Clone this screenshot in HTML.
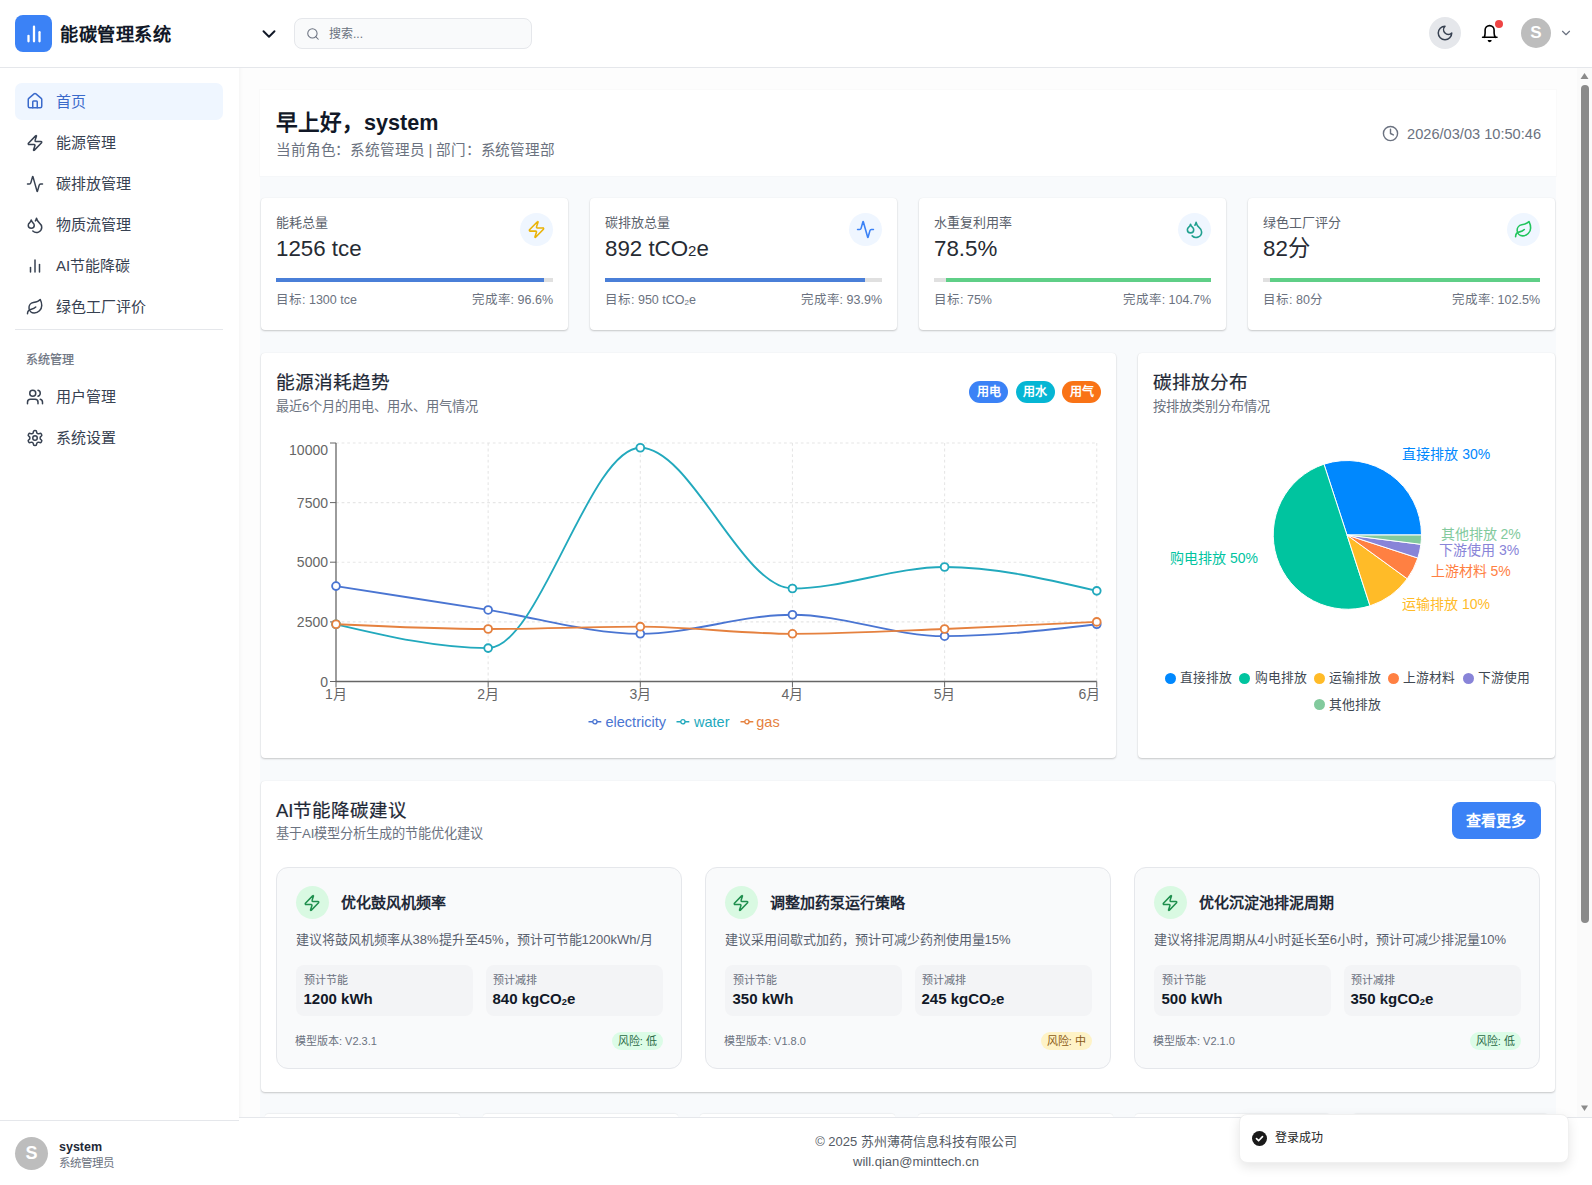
<!DOCTYPE html>
<html lang="zh-CN">
<head>
<meta charset="utf-8">
<title>能碳管理系统</title>
<style>
*{box-sizing:border-box;margin:0;padding:0}
html,body{width:1592px;height:1185px;overflow:hidden;background:#fdfdfd;font-family:"Liberation Sans",sans-serif;color:#111827}
.abs{position:absolute}
svg.ic{fill:none;stroke:currentColor;stroke-width:2;stroke-linecap:round;stroke-linejoin:round}
/* sidebar */
#sidebar{position:absolute;left:0;top:0;width:239px;height:1185px;background:#fff;box-shadow:1px 0 4px rgba(0,0,0,0.045)}
#logo{left:15px;top:15px;width:37px;height:37px;border-radius:8px;background:#3b82f6;color:#fff}
#logo svg{position:absolute;left:7.5px;top:7.5px;width:22px;height:22px;stroke-width:2.5}
#brand{left:60px;top:21px;font-size:18.2px;letter-spacing:0.5px;font-weight:bold;color:#111827;line-height:28px;white-space:nowrap}
#sbline{left:0;top:67px;width:239px;height:1px;background:#e5e7eb}
.nav{position:absolute;left:15px;width:208px;height:37px;border-radius:8px;color:#374151;font-size:15px;line-height:37px;white-space:nowrap}
.nav svg{position:absolute;left:11px;top:9.5px;width:18px;height:18px}
.nav span{position:absolute;left:41px;top:0}
.nav.active{background:#eff6ff;color:#3a6acb;border-radius:7px}
.nav.active svg{top:8.5px}
#sbdiv{left:15px;top:329px;width:208px;height:1px;background:#e5e7eb}
#sysl{left:26px;top:352px;font-size:12px;color:#6b7280;line-height:16px;-webkit-text-stroke:0.25px #6b7280}
#sbfoot{left:0;top:1120px;width:239px;height:1px;background:#e5e7eb}
#uav{left:15px;top:1137px;width:33px;height:33px;border-radius:50%;background:#bdbdbd;color:#fff;font-size:18px;font-weight:bold;line-height:33px;text-align:center}
#uname{left:59px;top:1139px;font-size:12.5px;font-weight:bold;color:#1f2937;line-height:16px}
#urole{left:59px;top:1156px;font-size:11.5px;color:#6b7280;line-height:15px}
/* header */
#header{position:absolute;left:239px;top:0;width:1353px;height:67px;background:#fff}
#hline{left:239px;top:67px;width:1353px;height:1px;background:#e5e7eb}
#search{left:294px;top:18px;width:238px;height:31px;border:1px solid #e5e7eb;border-radius:8px;background:#f9fafb}
#search svg{position:absolute;left:11px;top:7.5px;width:14px;height:14px;color:#6b7280;stroke-width:1.8}
#search span{position:absolute;left:34px;top:7px;font-size:12px;color:#6b7280;line-height:16px}
/* main */
#scroll{left:1577px;top:68px;width:15px;height:1049px;background:#fafafa}
#thumb{left:1581px;top:85px;width:8px;height:838px;border-radius:4px;background:#8c8c8c}
#container{left:260px;top:90px;width:1296px;height:1027px;background:#f8fafc}
.card{position:absolute;background:#fff;border-radius:4px;box-shadow:0 1px 2px rgba(0,0,0,0.2),0 0 1px rgba(0,0,0,0.08)}
#footer{left:239px;top:1117px;width:1338px;height:68px;background:#fff;border-top:1px solid #e5e7eb}
.sub{font-size:0.62em;vertical-align:-0.1em}
</style>
</head>
<body>
<!-- SIDEBAR -->
<div id="sidebar"></div>
<div id="logo" class="abs"><svg class="ic" viewBox="0 0 24 24"><line x1="18" x2="18" y1="20" y2="10"/><line x1="12" x2="12" y1="20" y2="4"/><line x1="6" x2="6" y1="20" y2="14"/></svg></div>
<div id="brand" class="abs">能碳管理系统</div>
<div id="sbline" class="abs"></div>

<div class="nav active" style="top:83px"><svg class="ic" viewBox="0 0 24 24"><path d="M15 21v-8a1 1 0 0 0-1-1h-4a1 1 0 0 0-1 1v8"/><path d="M3 10a2 2 0 0 1 .709-1.528l7-5.999a2 2 0 0 1 2.582 0l7 5.999A2 2 0 0 1 21 10v9a2 2 0 0 1-2 2H5a2 2 0 0 1-2-2z"/></svg><span>首页</span></div>
<div class="nav" style="top:124px"><svg class="ic" viewBox="0 0 24 24"><path d="M4 14a1 1 0 0 1-.78-1.63l9.9-10.2a.5.5 0 0 1 .86.46l-1.92 6.02A1 1 0 0 0 13 10h7a1 1 0 0 1 .78 1.630l-9.9 10.2a.5.5 0 0 1-.86-.46l1.92-6.02A1 1 0 0 0 11 14z"/></svg><span>能源管理</span></div>
<div class="nav" style="top:165px"><svg class="ic" viewBox="0 0 24 24"><path d="M22 12h-2.48a2 2 0 0 0-1.93 1.46l-2.35 8.36a.25.25 0 0 1-.48 0L9.24 2.18a.25.25 0 0 0-.48 0l-2.35 8.36A2 2 0 0 1 4.49 12H2"/></svg><span>碳排放管理</span></div>
<div class="nav" style="top:206px"><svg class="ic" viewBox="0 0 24 24"><path d="M7 16.3c2.2 0 4-1.83 4-4.05 0-1.16-.57-2.26-1.71-3.19S7.29 6.75 7 5.3c-.29 1.450-1.14 2.84-2.29 3.76S3 11.1 3 12.25c0 2.220 1.8 4.05 4 4.05z"/><path d="M12.56 6.6A10.97 10.97 0 0 0 14 3.02c.5 2.5 2 4.9 4 6.5s3 3.5 3 5.5a6.98 6.98 0 0 1-11.91 4.97"/></svg><span>物质流管理</span></div>
<div class="nav" style="top:247px"><svg class="ic" viewBox="0 0 24 24"><line x1="18" x2="18" y1="20" y2="10"/><line x1="12" x2="12" y1="20" y2="4"/><line x1="6" x2="6" y1="20" y2="14"/></svg><span>AI节能降碳</span></div>
<div class="nav" style="top:288px"><svg class="ic" viewBox="0 0 24 24"><path d="M11 20A7 7 0 0 1 9.8 6.1C15.5 5 17 4.48 19 2c1 2 2 4.18 2 8 0 5.5-4.78 10-10 10Z"/><path d="M2 21c0-3 1.85-5.36 5.08-6C9.5 14.52 12 13 13 12"/></svg><span>绿色工厂评价</span></div>
<div id="sbdiv" class="abs"></div>
<div id="sysl" class="abs">系统管理</div>
<div class="nav" style="top:378px"><svg class="ic" viewBox="0 0 24 24"><path d="M16 21v-2a4 4 0 0 0-4-4H6a4 4 0 0 0-4 4v2"/><circle cx="9" cy="7" r="4"/><path d="M22 21v-2a4 4 0 0 0-3-3.87"/><path d="M16 3.13a4 4 0 0 1 0 7.75"/></svg><span>用户管理</span></div>
<div class="nav" style="top:419px"><svg class="ic" viewBox="0 0 24 24"><path d="M12.22 2h-.44a2 2 0 0 0-2 2v.18a2 2 0 0 1-1 1.73l-.43.25a2 2 0 0 1-2 0l-.15-.08a2 2 0 0 0-2.73.73l-.22.38a2 2 0 0 0 .73 2.73l.15.1a2 2 0 0 1 1 1.72v.51a2 2 0 0 1-1 1.74l-.15.09a2 2 0 0 0-.73 2.73l.22.38a2 2 0 0 0 2.73.73l.15-.08a2 2 0 0 1 2 0l.43.25a2 2 0 0 1 1 1.73V20a2 2 0 0 0 2 2h.44a2 2 0 0 0 2-2v-.18a2 2 0 0 1 1-1.73l.43-.25a2 2 0 0 1 2 0l.15.08a2 2 0 0 0 2.73-.73l.22-.39a2 2 0 0 0-.73-2.73l-.15-.08a2 2 0 0 1-1-1.74v-.5a2 2 0 0 1 1-1.74l.15-.09a2 2 0 0 0 .73-2.73l-.22-.38a2 2 0 0 0-2.73-.73l-.15.08a2 2 0 0 1-2 0l-.43-.25a2 2 0 0 1-1-1.73V4a2 2 0 0 0-2-2z"/><circle cx="12" cy="12" r="3"/></svg><span>系统设置</span></div>
<div id="sbfoot" class="abs"></div>
<div id="uav" class="abs">S</div>
<div id="uname" class="abs">system</div>
<div id="urole" class="abs">系统管理员</div>

<!-- HEADER -->
<div id="header"></div>
<div id="hline" class="abs"></div>
<svg class="ic abs" style="left:258px;top:22.5px;width:22px;height:22px;color:#111827;stroke-width:2.1" viewBox="0 0 24 24"><path d="m6 9 6 6 6-6"/></svg>
<div id="search" class="abs"><svg class="ic" viewBox="0 0 24 24"><circle cx="11" cy="11" r="8"/><path d="m21 21-4.3-4.3"/></svg><span>搜索...</span></div>


<div class="abs" style="left:1429px;top:17px;width:32px;height:32px;border-radius:50%;background:#e5e7eb"></div>
<svg class="ic abs" style="left:1436px;top:24px;width:18px;height:18px;color:#374151" viewBox="0 0 24 24"><path d="M12 3a6 6 0 0 0 9 9 9 9 0 1 1-9-9Z"/></svg>
<svg class="abs" style="left:1480px;top:22px;width:20px;height:22px" viewBox="0 0 20 22"><path d="M2.6,15.3H17 M4.1,15.3Q5.1,13.6 5.1,11V8.1A4.5,4.5 0 0 1 14.1,8.1V11Q14.1,13.6 15.5,15.3" fill="none" stroke="#000" stroke-width="1.6" stroke-linecap="round" stroke-linejoin="round"/><path d="M7.6,18.1H11.7A2.05,2.05 0 0 1 7.6,18.1Z" fill="#000"/></svg>
<div class="abs" style="left:1495px;top:20px;width:8px;height:8px;border-radius:50%;background:#ef4444"></div>
<div class="abs" style="left:1521px;top:18px;width:30px;height:30px;border-radius:50%;background:#bdbdbd;color:#fff;font-size:17px;font-weight:bold;line-height:30px;text-align:center">S</div>
<svg class="ic abs" style="left:1559px;top:26px;width:14px;height:14px;color:#6b7280" viewBox="0 0 24 24"><path d="m6 9 6 6 6-6"/></svg>

<!-- MAIN -->
<div id="container" class="abs"></div>
<div class="abs" style="left:260px;top:90px;width:1296px;height:86px;background:#fff;box-shadow:0 0 0 1px rgba(0,0,0,0.012)"></div>
<div class="abs" style="left:276px;top:107px;font-size:21.6px;font-weight:bold;color:#111827;line-height:32px;white-space:nowrap">早上好，system</div>
<div class="abs" style="left:276px;top:139px;font-size:14.6px;letter-spacing:-0.15px;color:#6b7280;line-height:22px;white-space:nowrap">当前角色：系统管理员 | 部门：系统管理部</div>
<svg class="ic abs" style="left:1382px;top:125px;width:17px;height:17px;color:#6b7280" viewBox="0 0 24 24"><circle cx="12" cy="12" r="10"/><polyline points="12 6 12 12 16 14"/></svg>
<div class="abs" style="left:1406px;top:124px;width:135px;text-align:right;font-size:14.6px;color:#6b7280;line-height:20px;white-space:nowrap">2026/03/03 10:50:46</div>
<div class="card" style="left:261px;top:198px;width:307px;height:132px"></div>
<div class="abs" style="left:276px;top:214px;font-size:13px;color:#5b626c;line-height:18px;white-space:nowrap">能耗总量</div>
<div class="abs" style="left:276px;top:235px;font-size:22.3px;color:#262b33;line-height:28px;white-space:nowrap">1256 tce</div>
<div class="abs" style="left:520px;top:213px;width:33px;height:33px;border-radius:50%;background:#eff6ff"></div>
<svg class="ic abs" style="left:527px;top:220px;width:19px;height:19px;color:#eab308" viewBox="0 0 24 24"><path d="M4 14a1 1 0 0 1-.78-1.63l9.9-10.2a.5.5 0 0 1 .86.46l-1.92 6.02A1 1 0 0 0 13 10h7a1 1 0 0 1 .78 1.63l-9.9 10.2a.5.5 0 0 1-.86-.46l1.92-6.02A1 1 0 0 0 11 14z"/></svg>
<div class="abs" style="left:276px;top:278px;width:277px;height:4px;background:#e0e0e0;overflow:hidden">
<div class="abs" style="left:0;top:0;width:267.6px;height:4px;background:#4a7fd8"></div></div>
<div class="abs" style="left:276px;top:292px;font-size:12.5px;color:#6b7280;line-height:17px;white-space:nowrap">目标: 1300 tce</div>
<div class="abs" style="left:276px;top:292px;width:277px;text-align:right;font-size:12.5px;color:#6b7280;line-height:17px;white-space:nowrap">完成率: 96.6%</div>
<div class="card" style="left:590px;top:198px;width:307px;height:132px"></div>
<div class="abs" style="left:605px;top:214px;font-size:13px;color:#5b626c;line-height:18px;white-space:nowrap">碳排放总量</div>
<div class="abs" style="left:605px;top:235px;font-size:22.3px;color:#262b33;line-height:28px;white-space:nowrap">892 tCO<span style="font-size:15px">2</span>e</div>
<div class="abs" style="left:849px;top:213px;width:33px;height:33px;border-radius:50%;background:#eff6ff"></div>
<svg class="ic abs" style="left:856px;top:220px;width:19px;height:19px;color:#3b82f6" viewBox="0 0 24 24"><path d="M22 12h-2.48a2 2 0 0 0-1.93 1.46l-2.35 8.36a.25.25 0 0 1-.48 0L9.24 2.18a.25.25 0 0 0-.48 0l-2.35 8.36A2 2 0 0 1 4.49 12H2"/></svg>
<div class="abs" style="left:605px;top:278px;width:277px;height:4px;background:#e0e0e0;overflow:hidden">
<div class="abs" style="left:0;top:0;width:260.1px;height:4px;background:#4a7fd8"></div></div>
<div class="abs" style="left:605px;top:292px;font-size:12.5px;color:#6b7280;line-height:17px;white-space:nowrap">目标: 950 tCO<span style="font-size:8px;vertical-align:-1px">2</span>e</div>
<div class="abs" style="left:605px;top:292px;width:277px;text-align:right;font-size:12.5px;color:#6b7280;line-height:17px;white-space:nowrap">完成率: 93.9%</div>
<div class="card" style="left:919px;top:198px;width:307px;height:132px"></div>
<div class="abs" style="left:934px;top:214px;font-size:13px;color:#5b626c;line-height:18px;white-space:nowrap">水重复利用率</div>
<div class="abs" style="left:934px;top:235px;font-size:22.3px;color:#262b33;line-height:28px;white-space:nowrap">78.5%</div>
<div class="abs" style="left:1178px;top:213px;width:33px;height:33px;border-radius:50%;background:#eff6ff"></div>
<svg class="ic abs" style="left:1185px;top:220px;width:19px;height:19px;color:#20a08f" viewBox="0 0 24 24"><path d="M7 16.3c2.2 0 4-1.83 4-4.05 0-1.16-.57-2.26-1.71-3.19S7.29 6.75 7 5.3c-.29 1.45-1.14 2.84-2.29 3.76S3 11.1 3 12.25c0 2.22 1.8 4.05 4 4.05z"/><path d="M12.56 6.6A10.97 10.97 0 0 0 14 3.02c.5 2.5 2 4.9 4 6.5s3 3.5 3 5.5a6.98 6.98 0 0 1-11.91 4.97"/></svg>
<div class="abs" style="left:934px;top:278px;width:277px;height:4px;background:#e0e0e0;overflow:hidden">
<div class="abs" style="left:12.4px;top:0;width:264.6px;height:4px;background:#5fcf87"></div></div>
<div class="abs" style="left:934px;top:292px;font-size:12.5px;color:#6b7280;line-height:17px;white-space:nowrap">目标: 75%</div>
<div class="abs" style="left:934px;top:292px;width:277px;text-align:right;font-size:12.5px;color:#6b7280;line-height:17px;white-space:nowrap">完成率: 104.7%</div>
<div class="card" style="left:1248px;top:198px;width:307px;height:132px"></div>
<div class="abs" style="left:1263px;top:214px;font-size:13px;color:#5b626c;line-height:18px;white-space:nowrap">绿色工厂评分</div>
<div class="abs" style="left:1263px;top:235px;font-size:22.3px;color:#262b33;line-height:28px;white-space:nowrap">82分</div>
<div class="abs" style="left:1507px;top:213px;width:33px;height:33px;border-radius:50%;background:#eff6ff"></div>
<svg class="ic abs" style="left:1514px;top:220px;width:19px;height:19px;color:#22c55e" viewBox="0 0 24 24"><path d="M11 20A7 7 0 0 1 9.8 6.1C15.5 5 17 4.48 19 2c1 2 2 4.18 2 8 0 5.5-4.78 10-10 10Z"/><path d="M2 21c0-3 1.85-5.36 5.08-6C9.5 14.52 12 13 13 12"/></svg>
<div class="abs" style="left:1263px;top:278px;width:277px;height:4px;background:#e0e0e0;overflow:hidden">
<div class="abs" style="left:6.8px;top:0;width:270.2px;height:4px;background:#5fcf87"></div></div>
<div class="abs" style="left:1263px;top:292px;font-size:12.5px;color:#6b7280;line-height:17px;white-space:nowrap">目标: 80分</div>
<div class="abs" style="left:1263px;top:292px;width:277px;text-align:right;font-size:12.5px;color:#6b7280;line-height:17px;white-space:nowrap">完成率: 102.5%</div>
<div class="card" style="left:261px;top:353px;width:855px;height:405px"></div>
<div class="abs" style="left:276px;top:370px;font-size:18.7px;color:#1f2937;line-height:26px;-webkit-text-stroke:0.2px #1f2937;white-space:nowrap">能源消耗趋势</div>
<div class="abs" style="left:276px;top:397.5px;font-size:13.2px;color:#6b7280;line-height:18px;white-space:nowrap">最近6个月的用电、用水、用气情况</div>
<div class="abs" style="left:969.0px;top:381px;width:39px;height:22px;border-radius:11px;background:#3b82f6;color:#fff;font-size:12px;font-weight:bold;line-height:22px;text-align:center">用电</div>
<div class="abs" style="left:1015.6px;top:381px;width:39px;height:22px;border-radius:11px;background:#06b6d4;color:#fff;font-size:12px;font-weight:bold;line-height:22px;text-align:center">用水</div>
<div class="abs" style="left:1062.2px;top:381px;width:39px;height:22px;border-radius:11px;background:#f97316;color:#fff;font-size:12px;font-weight:bold;line-height:22px;text-align:center">用气</div>
<div class="card" style="left:1138px;top:353px;width:417px;height:405px"></div>
<div class="abs" style="left:1153px;top:370px;font-size:18.7px;color:#1f2937;line-height:26px;-webkit-text-stroke:0.2px #1f2937;white-space:nowrap">碳排放分布</div>
<div class="abs" style="left:1153px;top:397.5px;font-size:13.2px;color:#6b7280;line-height:18px;white-space:nowrap">按排放类别分布情况</div>
<svg class="abs" style="left:0;top:0;width:1592px;height:1185px;overflow:visible" viewBox="0 0 1592 1185">
<line x1="336" y1="621.9" x2="1096.75" y2="621.9" stroke="#e6e6e6" stroke-width="1.1" stroke-dasharray="2.8 2.8"/>
<line x1="336" y1="562.2" x2="1096.75" y2="562.2" stroke="#e6e6e6" stroke-width="1.1" stroke-dasharray="2.8 2.8"/>
<line x1="336" y1="502.6" x2="1096.75" y2="502.6" stroke="#e6e6e6" stroke-width="1.1" stroke-dasharray="2.8 2.8"/>
<line x1="336" y1="443.0" x2="1096.75" y2="443.0" stroke="#e6e6e6" stroke-width="1.1" stroke-dasharray="2.8 2.8"/>
<line x1="488.15" y1="443" x2="488.15" y2="681.5" stroke="#e6e6e6" stroke-width="1.1" stroke-dasharray="2.8 2.8"/>
<line x1="640.3" y1="443" x2="640.3" y2="681.5" stroke="#e6e6e6" stroke-width="1.1" stroke-dasharray="2.8 2.8"/>
<line x1="792.45" y1="443" x2="792.45" y2="681.5" stroke="#e6e6e6" stroke-width="1.1" stroke-dasharray="2.8 2.8"/>
<line x1="944.6" y1="443" x2="944.6" y2="681.5" stroke="#e6e6e6" stroke-width="1.1" stroke-dasharray="2.8 2.8"/>
<line x1="1096.75" y1="443" x2="1096.75" y2="681.5" stroke="#e6e6e6" stroke-width="1.1" stroke-dasharray="2.8 2.8"/>
<line x1="336" y1="443" x2="336" y2="681.5" stroke="#666" stroke-width="1.3"/>
<line x1="336" y1="681.5" x2="1096.75" y2="681.5" stroke="#666" stroke-width="1.3"/>
<line x1="330" y1="681.5" x2="336" y2="681.5" stroke="#666"/>
<text x="328" y="686.5" text-anchor="end" font-size="14" fill="#666">0</text>
<line x1="330" y1="621.9" x2="336" y2="621.9" stroke="#666"/>
<text x="328" y="626.9" text-anchor="end" font-size="14" fill="#666">2500</text>
<line x1="330" y1="562.2" x2="336" y2="562.2" stroke="#666"/>
<text x="328" y="567.2" text-anchor="end" font-size="14" fill="#666">5000</text>
<line x1="330" y1="502.6" x2="336" y2="502.6" stroke="#666"/>
<text x="328" y="507.6" text-anchor="end" font-size="14" fill="#666">7500</text>
<line x1="330" y1="443.0" x2="336" y2="443.0" stroke="#666"/>
<text x="328" y="455.0" text-anchor="end" font-size="14" fill="#666">10000</text>
<line x1="336.0" y1="681.5" x2="336.0" y2="687.5" stroke="#666"/>
<text x="336.0" y="698.5" text-anchor="middle" font-size="14" fill="#666">1月</text>
<line x1="488.15" y1="681.5" x2="488.15" y2="687.5" stroke="#666"/>
<text x="488.15" y="698.5" text-anchor="middle" font-size="14" fill="#666">2月</text>
<line x1="640.3" y1="681.5" x2="640.3" y2="687.5" stroke="#666"/>
<text x="640.3" y="698.5" text-anchor="middle" font-size="14" fill="#666">3月</text>
<line x1="792.45" y1="681.5" x2="792.45" y2="687.5" stroke="#666"/>
<text x="792.45" y="698.5" text-anchor="middle" font-size="14" fill="#666">4月</text>
<line x1="944.6" y1="681.5" x2="944.6" y2="687.5" stroke="#666"/>
<text x="944.6" y="698.5" text-anchor="middle" font-size="14" fill="#666">5月</text>
<line x1="1096.75" y1="681.5" x2="1096.75" y2="687.5" stroke="#666"/>
<text x="1089.5" y="698.5" text-anchor="middle" font-size="14" fill="#666">6月</text>
<path d="M336.00,586.10C386.72,594.05,437.43,602.00,488.15,609.95C538.87,617.90,589.58,633.80,640.30,633.80C691.02,633.80,741.73,614.72,792.45,614.72C843.17,614.72,893.88,636.18,944.60,636.18C995.32,636.18,1046.03,630.22,1096.75,624.26" fill="none" stroke="#4a75d2" stroke-width="1.85"/>
<path d="M336.00,624.26C386.72,636.18,437.43,648.11,488.15,648.11C538.87,648.11,589.58,447.77,640.30,447.77C691.02,447.77,741.73,588.49,792.45,588.49C843.17,588.49,893.88,567.02,944.60,567.02C995.32,567.02,1046.03,578.94,1096.75,590.87" fill="none" stroke="#22a9bd" stroke-width="1.85"/>
<path d="M336.00,624.26C386.72,626.64,437.43,629.03,488.15,629.03C538.87,629.03,589.58,626.64,640.30,626.64C691.02,626.64,741.73,633.80,792.45,633.80C843.17,633.80,893.88,631.02,944.60,629.03C995.32,627.04,1046.03,624.46,1096.75,621.88" fill="none" stroke="#e5813f" stroke-width="1.85"/>
<circle cx="336.0" cy="586.10" r="3.9" fill="#fff" stroke="#4a75d2" stroke-width="1.85"/>
<circle cx="488.15" cy="609.95" r="3.9" fill="#fff" stroke="#4a75d2" stroke-width="1.85"/>
<circle cx="640.3" cy="633.80" r="3.9" fill="#fff" stroke="#4a75d2" stroke-width="1.85"/>
<circle cx="792.45" cy="614.72" r="3.9" fill="#fff" stroke="#4a75d2" stroke-width="1.85"/>
<circle cx="944.6" cy="636.18" r="3.9" fill="#fff" stroke="#4a75d2" stroke-width="1.85"/>
<circle cx="1096.75" cy="624.26" r="3.9" fill="#fff" stroke="#4a75d2" stroke-width="1.85"/>
<circle cx="336.0" cy="624.26" r="3.9" fill="#fff" stroke="#22a9bd" stroke-width="1.85"/>
<circle cx="488.15" cy="648.11" r="3.9" fill="#fff" stroke="#22a9bd" stroke-width="1.85"/>
<circle cx="640.3" cy="447.77" r="3.9" fill="#fff" stroke="#22a9bd" stroke-width="1.85"/>
<circle cx="792.45" cy="588.49" r="3.9" fill="#fff" stroke="#22a9bd" stroke-width="1.85"/>
<circle cx="944.6" cy="567.02" r="3.9" fill="#fff" stroke="#22a9bd" stroke-width="1.85"/>
<circle cx="1096.75" cy="590.87" r="3.9" fill="#fff" stroke="#22a9bd" stroke-width="1.85"/>
<circle cx="336.0" cy="624.26" r="3.9" fill="#fff" stroke="#e5813f" stroke-width="1.85"/>
<circle cx="488.15" cy="629.03" r="3.9" fill="#fff" stroke="#e5813f" stroke-width="1.85"/>
<circle cx="640.3" cy="626.64" r="3.9" fill="#fff" stroke="#e5813f" stroke-width="1.85"/>
<circle cx="792.45" cy="633.80" r="3.9" fill="#fff" stroke="#e5813f" stroke-width="1.85"/>
<circle cx="944.6" cy="629.03" r="3.9" fill="#fff" stroke="#e5813f" stroke-width="1.85"/>
<circle cx="1096.75" cy="621.88" r="3.9" fill="#fff" stroke="#e5813f" stroke-width="1.85"/>
<g transform="translate(588.5,715.3) scale(0.40)"><path d="M0,16h10.667A5.333,5.333,0,1,1,21.333,16H32M21.333,16A5.333,5.333,0,1,1,10.667,16" fill="none" stroke="#4a75d2" stroke-width="3.4"/></g>
<text x="605.5" y="726.5" font-size="14.5" fill="#4a75d2">electricity</text>
<g transform="translate(676.5,715.3) scale(0.40)"><path d="M0,16h10.667A5.333,5.333,0,1,1,21.333,16H32M21.333,16A5.333,5.333,0,1,1,10.667,16" fill="none" stroke="#22a9bd" stroke-width="3.4"/></g>
<text x="694" y="726.5" font-size="14.5" fill="#22a9bd">water</text>
<g transform="translate(740.5,715.3) scale(0.40)"><path d="M0,16h10.667A5.333,5.333,0,1,1,21.333,16H32M21.333,16A5.333,5.333,0,1,1,10.667,16" fill="none" stroke="#e5813f" stroke-width="3.4"/></g>
<text x="756.3" y="726.5" font-size="14.5" fill="#e5813f">gas</text>
<path d="M1347,535L1421.50,535.00A74.5,74.5,0,0,0,1323.98,464.15Z" fill="#0088FE" stroke="#fff" stroke-width="1"/>
<path d="M1347,535L1323.98,464.15A74.5,74.5,0,0,0,1370.02,605.85Z" fill="#00C49F" stroke="#fff" stroke-width="1"/>
<path d="M1347,535L1370.02,605.85A74.5,74.5,0,0,0,1407.27,578.79Z" fill="#FFBB28" stroke="#fff" stroke-width="1"/>
<path d="M1347,535L1407.27,578.79A74.5,74.5,0,0,0,1417.85,558.02Z" fill="#FF8042" stroke="#fff" stroke-width="1"/>
<path d="M1347,535L1417.85,558.02A74.5,74.5,0,0,0,1420.91,544.34Z" fill="#8884D8" stroke="#fff" stroke-width="1"/>
<path d="M1347,535L1420.91,544.34A74.5,74.5,0,0,0,1421.50,535.00Z" fill="#82CA9D" stroke="#fff" stroke-width="1"/>
<text x="1402.3" y="458.8" text-anchor="start" font-size="14" fill="#0088FE">直接排放 30%</text>
<text x="1258" y="563" text-anchor="end" font-size="14" fill="#00C49F">购电排放 50%</text>
<text x="1402" y="609" text-anchor="start" font-size="14" fill="#FFBB28">运输排放 10%</text>
<text x="1430.7" y="575.7" text-anchor="start" font-size="14" fill="#FF8042">上游材料 5%</text>
<text x="1439" y="554.5" text-anchor="start" font-size="14" fill="#8884D8">下游使用 3%</text>
<text x="1440.5" y="539.3" text-anchor="start" font-size="14" fill="#82CA9D">其他排放 2%</text>
</svg>
<div class="abs" style="left:1164.7px;top:672.9px;width:11px;height:11px;border-radius:50%;background:#0088FE"></div>
<div class="abs" style="left:1180.0px;top:669.4px;font-size:12.8px;color:#404852;line-height:18px;white-space:nowrap">直接排放</div>
<div class="abs" style="left:1239.4px;top:672.9px;width:11px;height:11px;border-radius:50%;background:#00C49F"></div>
<div class="abs" style="left:1254.7px;top:669.4px;font-size:12.8px;color:#404852;line-height:18px;white-space:nowrap">购电排放</div>
<div class="abs" style="left:1313.6px;top:672.9px;width:11px;height:11px;border-radius:50%;background:#FFBB28"></div>
<div class="abs" style="left:1328.9px;top:669.4px;font-size:12.8px;color:#404852;line-height:18px;white-space:nowrap">运输排放</div>
<div class="abs" style="left:1388.1px;top:672.9px;width:11px;height:11px;border-radius:50%;background:#FF8042"></div>
<div class="abs" style="left:1403.4px;top:669.4px;font-size:12.8px;color:#404852;line-height:18px;white-space:nowrap">上游材料</div>
<div class="abs" style="left:1463.0px;top:672.9px;width:11px;height:11px;border-radius:50%;background:#8884D8"></div>
<div class="abs" style="left:1478.3px;top:669.4px;font-size:12.8px;color:#404852;line-height:18px;white-space:nowrap">下游使用</div>
<div class="abs" style="left:1313.6px;top:699.1px;width:11px;height:11px;border-radius:50%;background:#82CA9D"></div>
<div class="abs" style="left:1328.9px;top:695.6px;font-size:12.8px;color:#404852;line-height:18px;white-space:nowrap">其他排放</div>
<div class="card" style="left:261px;top:781px;width:1294px;height:311px"></div>
<div class="abs" style="left:276px;top:798px;font-size:18.5px;color:#1f2937;line-height:26px;-webkit-text-stroke:0.2px #1f2937;white-space:nowrap">AI节能降碳建议</div>
<div class="abs" style="left:276px;top:825px;font-size:13.2px;color:#6b7280;line-height:18px;white-space:nowrap">基于AI模型分析生成的节能优化建议</div>
<div class="abs" style="left:1451.5px;top:801.5px;width:89px;height:37px;border-radius:8px;background:#3b82f6;color:#fff;font-size:15px;font-weight:bold;line-height:37px;text-align:center">查看更多</div>
<div class="abs" style="left:276px;top:867px;width:406px;height:202px;border-radius:12px;background:#f9fafb;border:1px solid #e5e7eb"></div>
<div class="abs" style="left:295.5px;top:886px;width:33px;height:33px;border-radius:50%;background:#d9f9e2"></div>
<svg class="ic abs" style="left:303px;top:893.5px;width:18px;height:18px;color:#1f8f4e" viewBox="0 0 24 24"><path d="M4 14a1 1 0 0 1-.78-1.63l9.9-10.2a.5.5 0 0 1 .86.46l-1.92 6.02A1 1 0 0 0 13 10h7a1 1 0 0 1 .78 1.63l-9.9 10.2a.5.5 0 0 1-.86-.46l1.92-6.02A1 1 0 0 0 11 14z"/></svg>
<div class="abs" style="left:341px;top:892px;font-size:15px;font-weight:bold;color:#1f2937;line-height:22px;white-space:nowrap">优化鼓风机频率</div>
<div class="abs" style="left:295.5px;top:931px;font-size:13px;color:#5a6270;line-height:18px;white-space:nowrap">建议将鼓风机频率从38%提升至45%，预计可节能1200kWh/月</div>
<div class="abs" style="left:295.5px;top:965px;width:177px;height:51px;border-radius:8px;background:#f3f4f6"></div>
<div class="abs" style="left:303.5px;top:972px;font-size:11px;color:#6b7280;line-height:16px;white-space:nowrap">预计节能</div>
<div class="abs" style="left:303.5px;top:988px;font-size:15px;font-weight:bold;color:#111827;line-height:22px;white-space:nowrap">1200 kWh</div>
<div class="abs" style="left:486.0px;top:965px;width:177px;height:51px;border-radius:8px;background:#f3f4f6"></div>
<div class="abs" style="left:492.5px;top:972px;font-size:11px;color:#6b7280;line-height:16px;white-space:nowrap">预计减排</div>
<div class="abs" style="left:492.5px;top:988px;font-size:15px;font-weight:bold;color:#111827;line-height:22px;white-space:nowrap">840 kgCO<span class="sub">2</span>e</div>
<div class="abs" style="left:295px;top:1033px;font-size:11px;color:#6b7280;line-height:16px;white-space:nowrap">模型版本: V2.3.1</div>
<div class="abs" style="left:612px;top:1032px;width:50.5px;height:18px;border-radius:9px;background:#dcfce7;color:#2b6a45;font-size:11px;line-height:18px;text-align:center;white-space:nowrap">风险: 低</div>
<div class="abs" style="left:705px;top:867px;width:406px;height:202px;border-radius:12px;background:#f9fafb;border:1px solid #e5e7eb"></div>
<div class="abs" style="left:724.5px;top:886px;width:33px;height:33px;border-radius:50%;background:#d9f9e2"></div>
<svg class="ic abs" style="left:732px;top:893.5px;width:18px;height:18px;color:#1f8f4e" viewBox="0 0 24 24"><path d="M4 14a1 1 0 0 1-.78-1.63l9.9-10.2a.5.5 0 0 1 .86.46l-1.92 6.02A1 1 0 0 0 13 10h7a1 1 0 0 1 .78 1.63l-9.9 10.2a.5.5 0 0 1-.86-.46l1.92-6.02A1 1 0 0 0 11 14z"/></svg>
<div class="abs" style="left:770px;top:892px;font-size:15px;font-weight:bold;color:#1f2937;line-height:22px;white-space:nowrap">调整加药泵运行策略</div>
<div class="abs" style="left:724.5px;top:931px;font-size:13px;color:#5a6270;line-height:18px;white-space:nowrap">建议采用间歇式加药，预计可减少药剂使用量15%</div>
<div class="abs" style="left:724.5px;top:965px;width:177px;height:51px;border-radius:8px;background:#f3f4f6"></div>
<div class="abs" style="left:732.5px;top:972px;font-size:11px;color:#6b7280;line-height:16px;white-space:nowrap">预计节能</div>
<div class="abs" style="left:732.5px;top:988px;font-size:15px;font-weight:bold;color:#111827;line-height:22px;white-space:nowrap">350 kWh</div>
<div class="abs" style="left:915.0px;top:965px;width:177px;height:51px;border-radius:8px;background:#f3f4f6"></div>
<div class="abs" style="left:921.5px;top:972px;font-size:11px;color:#6b7280;line-height:16px;white-space:nowrap">预计减排</div>
<div class="abs" style="left:921.5px;top:988px;font-size:15px;font-weight:bold;color:#111827;line-height:22px;white-space:nowrap">245 kgCO<span class="sub">2</span>e</div>
<div class="abs" style="left:724px;top:1033px;font-size:11px;color:#6b7280;line-height:16px;white-space:nowrap">模型版本: V1.8.0</div>
<div class="abs" style="left:1041px;top:1032px;width:50.5px;height:18px;border-radius:9px;background:#fef3c7;color:#8a5a14;font-size:11px;line-height:18px;text-align:center;white-space:nowrap">风险: 中</div>
<div class="abs" style="left:1134px;top:867px;width:406px;height:202px;border-radius:12px;background:#f9fafb;border:1px solid #e5e7eb"></div>
<div class="abs" style="left:1153.5px;top:886px;width:33px;height:33px;border-radius:50%;background:#d9f9e2"></div>
<svg class="ic abs" style="left:1161px;top:893.5px;width:18px;height:18px;color:#1f8f4e" viewBox="0 0 24 24"><path d="M4 14a1 1 0 0 1-.78-1.63l9.9-10.2a.5.5 0 0 1 .86.46l-1.92 6.02A1 1 0 0 0 13 10h7a1 1 0 0 1 .78 1.63l-9.9 10.2a.5.5 0 0 1-.86-.46l1.92-6.02A1 1 0 0 0 11 14z"/></svg>
<div class="abs" style="left:1199px;top:892px;font-size:15px;font-weight:bold;color:#1f2937;line-height:22px;white-space:nowrap">优化沉淀池排泥周期</div>
<div class="abs" style="left:1153.5px;top:931px;font-size:13px;color:#5a6270;line-height:18px;white-space:nowrap">建议将排泥周期从4小时延长至6小时，预计可减少排泥量10%</div>
<div class="abs" style="left:1153.5px;top:965px;width:177px;height:51px;border-radius:8px;background:#f3f4f6"></div>
<div class="abs" style="left:1161.5px;top:972px;font-size:11px;color:#6b7280;line-height:16px;white-space:nowrap">预计节能</div>
<div class="abs" style="left:1161.5px;top:988px;font-size:15px;font-weight:bold;color:#111827;line-height:22px;white-space:nowrap">500 kWh</div>
<div class="abs" style="left:1344.0px;top:965px;width:177px;height:51px;border-radius:8px;background:#f3f4f6"></div>
<div class="abs" style="left:1350.5px;top:972px;font-size:11px;color:#6b7280;line-height:16px;white-space:nowrap">预计减排</div>
<div class="abs" style="left:1350.5px;top:988px;font-size:15px;font-weight:bold;color:#111827;line-height:22px;white-space:nowrap">350 kgCO<span class="sub">2</span>e</div>
<div class="abs" style="left:1153px;top:1033px;font-size:11px;color:#6b7280;line-height:16px;white-space:nowrap">模型版本: V2.1.0</div>
<div class="abs" style="left:1470px;top:1032px;width:50.5px;height:18px;border-radius:9px;background:#dcfce7;color:#2b6a45;font-size:11px;line-height:18px;text-align:center;white-space:nowrap">风险: 低</div>
<div class="abs" style="left:265.0px;top:1114px;width:195px;height:3px;border-radius:6px 6px 0 0;background:#fff;box-shadow:0 -0.5px 1px rgba(0,0,0,0.08)"></div>
<div class="abs" style="left:482.5px;top:1114px;width:195px;height:3px;border-radius:6px 6px 0 0;background:#fff;box-shadow:0 -0.5px 1px rgba(0,0,0,0.08)"></div>
<div class="abs" style="left:700.0px;top:1114px;width:195px;height:3px;border-radius:6px 6px 0 0;background:#fff;box-shadow:0 -0.5px 1px rgba(0,0,0,0.08)"></div>
<div class="abs" style="left:917.5px;top:1114px;width:195px;height:3px;border-radius:6px 6px 0 0;background:#fff;box-shadow:0 -0.5px 1px rgba(0,0,0,0.08)"></div>
<div class="abs" style="left:1135.0px;top:1114px;width:195px;height:3px;border-radius:6px 6px 0 0;background:#fff;box-shadow:0 -0.5px 1px rgba(0,0,0,0.08)"></div>
<div class="abs" style="left:1352.5px;top:1114px;width:195px;height:3px;border-radius:6px 6px 0 0;background:#fff;box-shadow:0 -0.5px 1px rgba(0,0,0,0.08)"></div>
<div class="abs" style="left:239px;top:1117px;width:1353px;height:68px;background:#fff;border-top:1px solid #e5e7eb"></div>
<div class="abs" style="left:239px;top:1132px;width:1354px;text-align:center;font-size:13px;color:#555b65;line-height:19px;white-space:nowrap">© 2025 苏州薄荷信息科技有限公司</div>
<div class="abs" style="left:239px;top:1152px;width:1354px;text-align:center;font-size:13px;color:#555b65;line-height:19px;white-space:nowrap">will.qian@minttech.cn</div>
<div class="abs" style="left:1239px;top:1114px;width:329.5px;height:48.5px;border-radius:8px;background:#fff;box-shadow:0 4px 12px rgba(0,0,0,0.1);border:1px solid #f0f0f0"></div>
<svg class="abs" style="left:1252px;top:1130.5px;width:15px;height:15px" viewBox="0 0 20 20"><circle cx="10" cy="10" r="10" fill="#1a1a1a"/><path d="M6,10.2L8.8,13L14,7.5" fill="none" stroke="#fff" stroke-width="2.2" stroke-linecap="round" stroke-linejoin="round"/></svg>
<div class="abs" style="left:1275px;top:1129px;font-size:12px;color:#262626;line-height:19px;white-space:nowrap">登录成功</div>
<div class="abs" style="left:1577px;top:68px;width:15px;height:1049px;background:#fafafa"></div>
<div class="abs" style="left:1581px;top:85px;width:8px;height:837.5px;border-radius:4px;background:#8a8a8a"></div>
<svg class="abs" style="left:1577px;top:68px;width:15px;height:15px" viewBox="0 0 15 15"><path d="M3.5,11L7.5,5L11.5,11Z" fill="#8a8a8a"/></svg>
<svg class="abs" style="left:1577px;top:1100px;width:15px;height:15px" viewBox="0 0 15 15"><path d="M4,5.5L7.5,11L11,5.5Z" fill="#8a8a8a"/></svg></body>
</html>
